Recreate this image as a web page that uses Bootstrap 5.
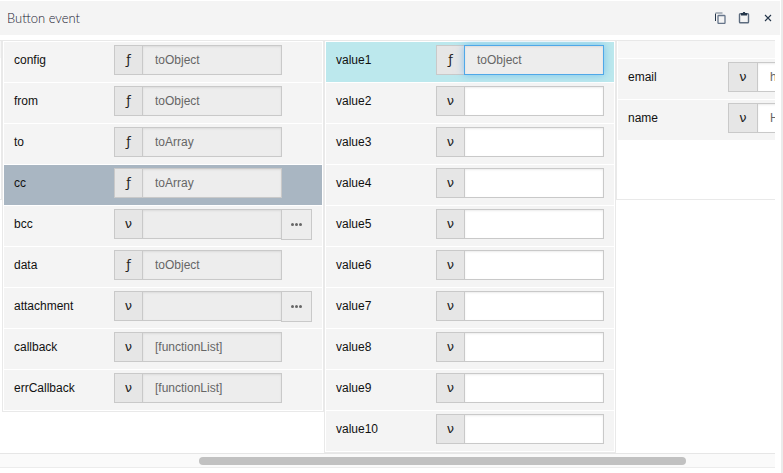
<!DOCTYPE html>
<html lang="en">
<head>
<meta charset="utf-8">
<meta name="viewport" content="width=device-width, initial-scale=1">
<title>Button event</title>
<link href="https://cdn.jsdelivr.net/npm/bootstrap@5.3.0/dist/css/bootstrap.min.css" rel="stylesheet">
<style>
body { font: 12px/16px "Liberation Sans", Arial, sans-serif; color: #111; background: #fff; }
.editor { border-right: 2px solid #ebebeb; padding: 1px 1px 0 0; }
.editor-head { background: #f4f4f4; height: 34px; padding: 0 4px 0 7px; }
.editor-title { font: 300 13px/16px Lato, "Liberation Sans", sans-serif; color: #223; }
.tool { width: 16px; height: 16px; color: #25364a; background: none; border: 0; padding: 0; display: flex; align-items: center; justify-content: center; }
.editor-body { margin: 5px 5px 0 0; }
.strip { border-top: 1px solid #e8e8e8; }
.pane { flex: none; border: 1px solid #e9e9e9; border-top: 0; padding: 1px; display: flex; flex-direction: column; gap: 1px; min-height: 159px; }
.pane-wide { width: 322px; }
.pane-mid { width: 292px; }
.pane-stub { width: 2px; border-left: 0; padding: 0; background: linear-gradient(#f7f7f7 17px, #fff 17px); }
.pane-next { padding-top: 0; }
.pane-cap { height: 17px; background: #f7f7f7; }
.prop { background: #f4f4f4; height: 40px; padding: 3px 0 0 10px; display: flex; align-items: flex-start; }
.prop-label { width: 100px; line-height: 30px; flex: none; }
.prop-picked { background: #a9b6c2; }
.prop-active { background: #bce8ed; }
.prop .input-group { width: auto; align-items: flex-start; }
.prop .kind { width: 29px; height: 30px; padding: 0; border: 1px solid #c9c9c9; border-radius: 0; background: #e6e6e6; color: #222; font: 13px/26px "DejaVu Sans", sans-serif; }
.pane-next .kind { width: 30px; }
.prop .form-control { flex: none; width: 140px; height: 30px; min-height: 0; padding: 0 12px; border: 1px solid #c9c9c9; border-radius: 0; font-size: 12px; line-height: 16px; color: #666; background: #fff; box-shadow: inset 0 1px 2px rgba(0,0,0,.08); }
.prop .form-control[readonly] { background: #ededed; }
.prop-active .form-control { border-color: #4fa8e8; box-shadow: inset 0 1px 2px rgba(0,0,0,.08), 0 0 8px rgba(82,168,236,.6); z-index: 2; }
.prop .more { width: 31px; height: 31px; padding: 0; border: 1px solid #c9c9c9; border-radius: 0; background: #ededed; color: #666; display: flex; align-items: center; justify-content: center; }
.track { height: 15px; background: #fafafa; border-top: 1px solid #e6e6e6; border-bottom: 1px solid #ececec; padding-top: 3px; }
.thumb { height: 8px; width: 62.8%; margin-left: 25.7%; border-radius: 4px; background: #c1c1c1; }
</style>
<script src="https://cdn.jsdelivr.net/npm/bootstrap@5.3.0/dist/js/bootstrap.bundle.min.js"></script>
</head>
<body>
<main class="editor min-vh-100">
  <header class="editor-head d-flex align-items-center justify-content-between">
    <h1 class="editor-title m-0">Button event</h1>
    <div class="d-flex align-items-center gap-2">
      <button class="tool" type="button" aria-label="Copy"><svg width="12" height="12" viewBox="0 0 12 12" fill="none"><path d="M1.500 9V1.500" stroke="#25364a"/><path d="M1.500 1H8.500" stroke="#8b96a3" stroke-width="1.300"/><rect x="4" y="3.500" width="7" height="8" rx=".8" stroke="#66758a" stroke-width="1.300"/></svg></button>
      <button class="tool" type="button" aria-label="Paste"><svg width="12" height="12" viewBox="0 0 12 12" fill="none"><rect x="1.500" y="1.800" width="9" height="9" rx=".8" stroke="#5c6b7e" stroke-width="1.400"/><path d="M3 1h1.800a1.200 1.200 0 0 1 2.400 0H9v2.500H3z" fill="#25364a"/></svg></button>
      <button class="tool" type="button" aria-label="Close"><svg width="8" height="8" viewBox="0 0 8 8"><path d="M1 1l6 6M7 1L1 7" stroke="#25364a" stroke-width="1.100"/></svg></button>
    </div>
  </header>
  <div class="editor-body">
    <div class="strip d-flex align-items-start overflow-hidden">
      <div class="pane pane-stub"></div>
      <section class="pane pane-wide">
        <div class="prop"><label class="prop-label" for="config">config</label><div class="input-group flex-nowrap"><button class="kind" type="button">ƒ</button><input class="form-control" id="config" value="toObject" readonly></div></div>
        <div class="prop"><label class="prop-label" for="from">from</label><div class="input-group flex-nowrap"><button class="kind" type="button">ƒ</button><input class="form-control" id="from" value="toObject" readonly></div></div>
        <div class="prop"><label class="prop-label" for="to">to</label><div class="input-group flex-nowrap"><button class="kind" type="button">ƒ</button><input class="form-control" id="to" value="toArray" readonly></div></div>
        <div class="prop prop-picked"><label class="prop-label" for="cc">cc</label><div class="input-group flex-nowrap"><button class="kind" type="button">ƒ</button><input class="form-control" id="cc" value="toArray" readonly></div></div>
        <div class="prop"><label class="prop-label" for="bcc">bcc</label><div class="input-group flex-nowrap"><button class="kind" type="button">ν</button><input class="form-control" id="bcc" readonly><button class="more" type="button" aria-label="More"><svg width="11" height="3" viewBox="0 0 11 3" fill="currentColor"><circle cx="1.500" cy="1.500" r="1.500"/><circle cx="5.500" cy="1.500" r="1.500"/><circle cx="9.500" cy="1.500" r="1.500"/></svg></button></div></div>
        <div class="prop"><label class="prop-label" for="data">data</label><div class="input-group flex-nowrap"><button class="kind" type="button">ƒ</button><input class="form-control" id="data" value="toObject" readonly></div></div>
        <div class="prop"><label class="prop-label" for="attachment">attachment</label><div class="input-group flex-nowrap"><button class="kind" type="button">ν</button><input class="form-control" id="attachment" readonly><button class="more" type="button" aria-label="More"><svg width="11" height="3" viewBox="0 0 11 3" fill="currentColor"><circle cx="1.500" cy="1.500" r="1.500"/><circle cx="5.500" cy="1.500" r="1.500"/><circle cx="9.500" cy="1.500" r="1.500"/></svg></button></div></div>
        <div class="prop"><label class="prop-label" for="callback">callback</label><div class="input-group flex-nowrap"><button class="kind" type="button">ν</button><input class="form-control" id="callback" value="[functionList]" readonly></div></div>
        <div class="prop"><label class="prop-label" for="errCallback">errCallback</label><div class="input-group flex-nowrap"><button class="kind" type="button">ν</button><input class="form-control" id="errCallback" value="[functionList]" readonly></div></div>
      </section>
      <section class="pane pane-mid">
        <div class="prop prop-active"><label class="prop-label" for="value1">value1</label><div class="input-group flex-nowrap"><button class="kind" type="button">ƒ</button><input class="form-control" id="value1" value="toObject" readonly></div></div>
        <div class="prop"><label class="prop-label" for="value2">value2</label><div class="input-group flex-nowrap"><button class="kind" type="button">ν</button><input class="form-control" id="value2"></div></div>
        <div class="prop"><label class="prop-label" for="value3">value3</label><div class="input-group flex-nowrap"><button class="kind" type="button">ν</button><input class="form-control" id="value3"></div></div>
        <div class="prop"><label class="prop-label" for="value4">value4</label><div class="input-group flex-nowrap"><button class="kind" type="button">ν</button><input class="form-control" id="value4"></div></div>
        <div class="prop"><label class="prop-label" for="value5">value5</label><div class="input-group flex-nowrap"><button class="kind" type="button">ν</button><input class="form-control" id="value5"></div></div>
        <div class="prop"><label class="prop-label" for="value6">value6</label><div class="input-group flex-nowrap"><button class="kind" type="button">ν</button><input class="form-control" id="value6"></div></div>
        <div class="prop"><label class="prop-label" for="value7">value7</label><div class="input-group flex-nowrap"><button class="kind" type="button">ν</button><input class="form-control" id="value7"></div></div>
        <div class="prop"><label class="prop-label" for="value8">value8</label><div class="input-group flex-nowrap"><button class="kind" type="button">ν</button><input class="form-control" id="value8"></div></div>
        <div class="prop"><label class="prop-label" for="value9">value9</label><div class="input-group flex-nowrap"><button class="kind" type="button">ν</button><input class="form-control" id="value9"></div></div>
        <div class="prop"><label class="prop-label" for="value10">value10</label><div class="input-group flex-nowrap"><button class="kind" type="button">ν</button><input class="form-control" id="value10"></div></div>
      </section>
      <section class="pane pane-mid pane-next">
        <div class="pane-cap"></div>
        <div class="prop"><label class="prop-label" for="email">email</label><div class="input-group flex-nowrap"><button class="kind" type="button">ν</button><input class="form-control" id="email" value="h"></div></div>
        <div class="prop"><label class="prop-label" for="name">name</label><div class="input-group flex-nowrap"><button class="kind" type="button">ν</button><input class="form-control" id="name" value="H"></div></div>
      </section>
    </div>
    <div class="track"><div class="thumb"></div></div>
  </div>
</main>
</body>
</html>
